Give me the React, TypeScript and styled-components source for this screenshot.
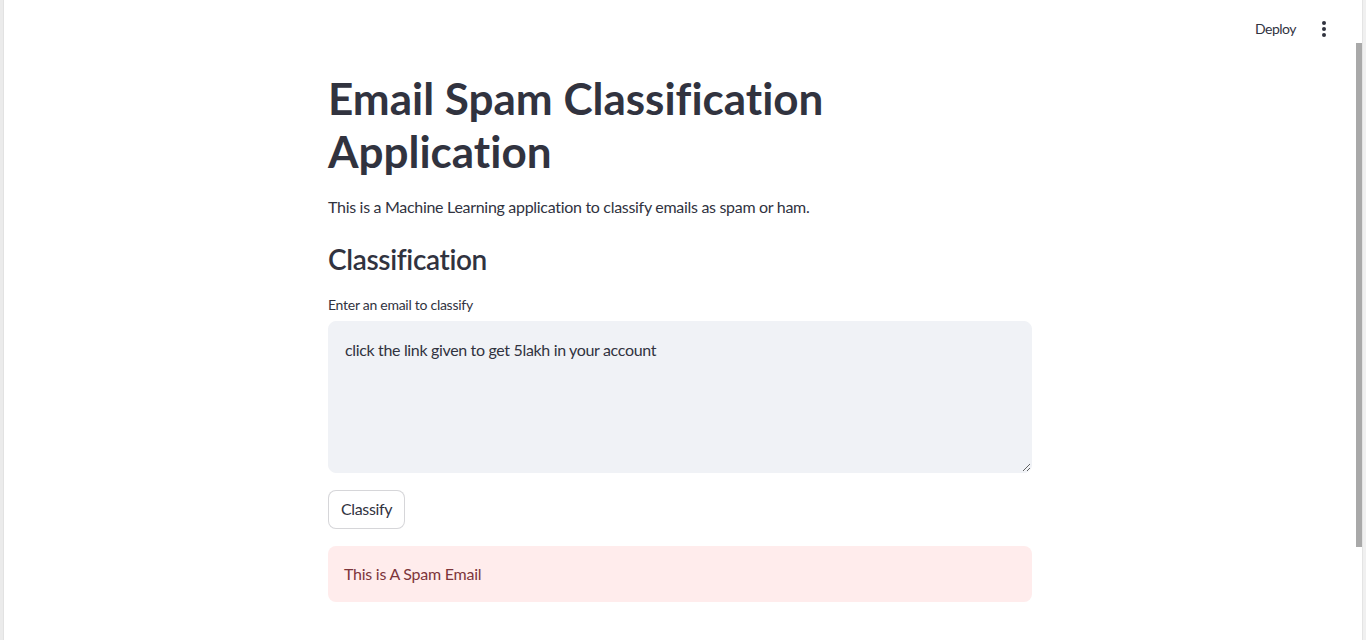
import React from "react";
import styled, { createGlobalStyle } from "styled-components";

const GlobalStyle = createGlobalStyle`
  html, body { margin: 0; padding: 0; background: #ffffff; }
  body {
    font-family: Lato, "Noto Sans", sans-serif;
    color: rgb(49, 51, 63);
    font-variant-ligatures: none;
  }
  * { box-sizing: border-box; }
`;

const Frame = styled.div`
  display: flex;
  width: 1366px;
  height: 640px;
  overflow: hidden;
  background: #ffffff;
`;

const LeftEdge = styled.div`
  width: 4px;
  flex: none;
  background: #ebebeb;
  border-right: 1px solid #e2e2e2;
`;

const Main = styled.div`
  flex: 1;
  display: flex;
  flex-direction: column;
  min-width: 0;
`;

const Header = styled.header`
  height: 60px;
  display: flex;
  align-items: center;
  justify-content: flex-end;
  padding-right: 20px;
  gap: 8px;
`;

const DeployButton = styled.button`
  border: none;
  background: transparent;
  font-family: Lato, "Noto Sans", sans-serif;
  font-variant-ligatures: none;
  font-size: 14px;
  letter-spacing: -0.5px;
  color: rgb(49, 51, 63);
  padding: 0 8px;
  height: 32px;
  margin-top: -3px;
  cursor: pointer;
`;

const MenuButton = styled.button`
  border: none;
  background: transparent;
  width: 24px;
  height: 32px;
  padding: 0;
  display: flex;
  align-items: center;
  justify-content: center;
  margin-top: -3px;
`;

const Content = styled.main`
  width: 704px;
  margin: 0 auto;
  padding-top: 12px;
  display: flex;
  flex-direction: column;
`;

const Title = styled.h1`
  margin: 0;
  max-width: 620px;
  font-size: 44px;
  line-height: 53px;
  font-weight: 700;
  color: rgb(49, 51, 63);
`;

const Paragraph = styled.p`
  margin: 16px 0 0;
  font-size: 16px;
  line-height: 25.6px;
  letter-spacing: -0.3px;
`;

const Subheader = styled.h3`
  margin: 23px 0 0;
  font-size: 28px;
  line-height: 33.6px;
  font-weight: 600;
  letter-spacing: -0.35px;
`;

const Field = styled.div`
  margin-top: 17px;
  display: flex;
  flex-direction: column;
`;

const Label = styled.label`
  font-size: 14px;
  min-height: 24px;
  line-height: 24px;
  margin-bottom: 4px;
  letter-spacing: -0.27px;
`;

const TextArea = styled.textarea`
  width: 100%;
  height: 152px;
  border: 1px solid rgb(240, 242, 246);
  border-radius: 8px;
  background: rgb(240, 242, 246);
  padding: 15px 16px 16px;
  font-family: Lato, "Noto Sans", sans-serif;
  font-variant-ligatures: none;
  font-size: 16px;
  line-height: 25.6px;
  letter-spacing: -0.34px;
  color: rgb(49, 51, 63);
  resize: vertical;
  outline: none;
`;

const Button = styled.button`
  align-self: flex-start;
  margin-top: 17px;
  height: 39px;
  padding: 0 12px 2px;
  border: 1px solid rgba(49, 51, 63, 0.2);
  border-radius: 8px;
  background: #ffffff;
  font-family: Lato, "Noto Sans", sans-serif;
  font-variant-ligatures: none;
  font-size: 16px;
  letter-spacing: -0.35px;
  color: rgb(49, 51, 63);
`;

const Alert = styled.div`
  margin-top: 17px;
  height: 56px;
  display: flex;
  align-items: center;
  padding: 0 16px 2px;
  border-radius: 8px;
  background: rgb(255, 236, 236);
  color: rgb(125, 53, 59);
  font-size: 16px;
  letter-spacing: -0.25px;
`;

const ScrollTrack = styled.div`
  width: 10px;
  flex: none;
  display: flex;
  padding-top: 43px;
`;

const Thumb = styled.div`
  width: 6px;
  height: 504px;
  background: #a9a9a9;
`;

const TrackEdge = styled.div`
  width: 4px;
  height: 640px;
  margin-top: -43px;
  background: #f0f0f0;
  border-left: 1px solid #e4e4e4;
`;

const KebabIcon = () => (
  <svg width="4" height="16" viewBox="0 0 4 16" fill="rgb(49,51,63)">
    <circle cx="2" cy="2" r="2" />
    <circle cx="2" cy="8" r="2" />
    <circle cx="2" cy="14" r="2" />
  </svg>
);

export default function App() {
  return (
    <>
      <GlobalStyle />
      <Frame>
        <LeftEdge />
        <Main>
          <Header>
            <DeployButton>Deploy</DeployButton>
            <MenuButton aria-label="Main menu">
              <KebabIcon />
            </MenuButton>
          </Header>
          <Content>
            <Title>Email Spam Classification Application</Title>
            <Paragraph>
              This is a Machine Learning application to classify emails as spam or ham.
            </Paragraph>
            <Subheader>Classification</Subheader>
            <Field>
              <Label>Enter an email to classify</Label>
              <TextArea defaultValue="click the link given to get 5lakh in your account" />
            </Field>
            <Button>Classify</Button>
            <Alert>This is A Spam Email</Alert>
          </Content>
        </Main>
        <ScrollTrack>
          <Thumb />
          <TrackEdge />
        </ScrollTrack>
      </Frame>
    </>
  );
}
